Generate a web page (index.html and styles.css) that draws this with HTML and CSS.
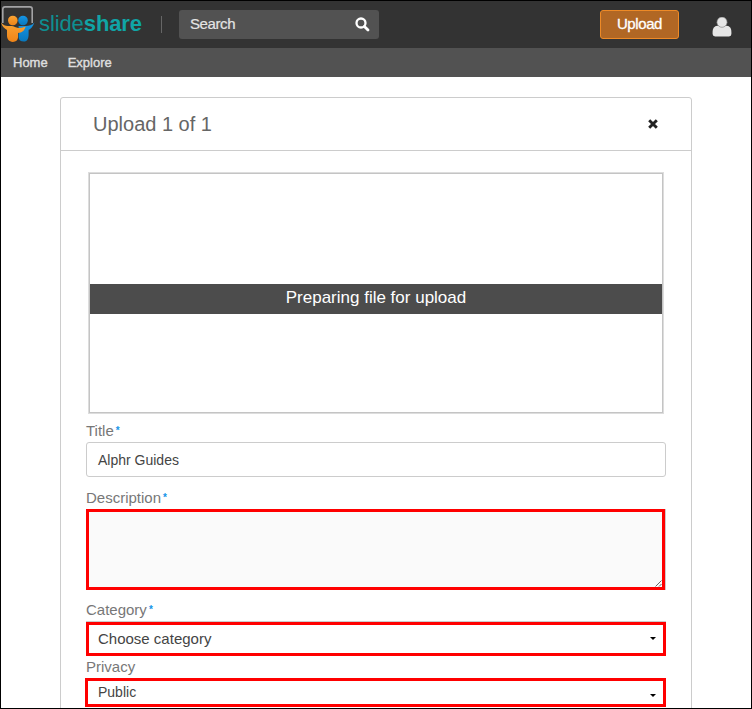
FILE: index.html
```html
<!DOCTYPE html>
<html lang="en">
<head>
<meta charset="utf-8">
<title>Upload - SlideShare</title>
<link rel="stylesheet" href="styles.css">
</head>
<body>
<div class="page">
  <header class="topbar">
    <a class="logo">
      <svg class="logo-mark" width="34" height="38" viewBox="0 0 34 38">
        <defs>
          <linearGradient id="orange" x1="0" y1="0" x2="0" y2="1"><stop offset="0" stop-color="#f9a333"/><stop offset="1" stop-color="#ef8418"/></linearGradient>
          <linearGradient id="blue" x1="0" y1="0" x2="0" y2="1"><stop offset="0" stop-color="#1695e6"/><stop offset="1" stop-color="#0878bd"/></linearGradient>
        </defs>
        <path d="M1.8 18V4.2Q1.8 1.9 4 1.9H29Q31.2 1.9 31.2 4.2V18" fill="none" stroke="#a3a3a5" stroke-width="1.6"/>
        <circle cx="11.8" cy="15.5" r="4.8" fill="url(#orange)"/>
        <circle cx="22" cy="15.5" r="4.8" fill="url(#blue)"/>
        <path d="M33.4 17.4C32 21.8 29.6 23.6 27.6 25V29.5C27.6 33.4 26.3 36.6 22.9 36.6 19.6 36.6 17.6 35 17.6 32V20.9H25C28 20.9 31.2 20.3 33.4 17.4Z" fill="url(#blue)"/>
        <path d="M0 17.4C2.4 20.4 5 20.9 9.5 20.9 13.5 20.9 14.5 22.6 17.5 22.9 20 23.2 22 22.7 24.6 21.6 23.6 26 20.7 27.8 17 28V32.5C16.8 35.3 15 36.9 11.9 36.9 8 36.9 6 34.2 6 30.6V24.9C3.6 23.4 1.1 21.6 0 17.4Z" fill="url(#orange)"/>
      </svg>
      <span class="logo-text">slide<b>share</b></span>
    </a>
    <span class="divider"></span>
    <div class="search">
      <span>Search</span>
      <svg width="15" height="15" viewBox="0 0 15 15"><circle cx="6" cy="6" r="4.5" fill="none" stroke="#fff" stroke-width="2.3"/><path d="M9.4 9.4L13 13" stroke="#fff" stroke-width="2.8" stroke-linecap="round"/></svg>
    </div>
    <a class="upload-btn">Upload</a>
    <svg class="user" width="20" height="20" viewBox="0 0 20 20"><path d="M5.3 8.8C2.3 9 .6 11.5 .6 15V17Q.6 19.4 3.1 19.4H17Q19.4 19.4 19.4 17V15C19.4 11.5 17.8 9 14.8 8.8Z" fill="#e6e6e6"/><circle cx="10" cy="5.2" r="5.1" fill="#e6e6e6" stroke="#777" stroke-width=".6"/></svg>
  </header>
  <nav class="nav"><a>Home</a><a>Explore</a></nav>

  <main class="card">
    <div class="card-head">
      <h1>Upload 1 of 1</h1>
      <svg width="10" height="10" viewBox="0 0 10 10"><path d="M1.2 1.2L8.8 8.8M8.8 1.2L1.2 8.8" stroke="#222" stroke-width="2.9"/></svg>
    </div>
    <div class="preview"><div class="status">Preparing file for upload</div></div>
    <form class="form">
      <label class="label label-title">Title<i>*</i></label>
      <div class="field input">Alphr Guides</div>
      <label class="label label-description">Description<i>*</i></label>
      <div class="field textarea">
        <svg width="7" height="7" viewBox="0 0 7 7"><path d="M.5 6.5L6.5 .5M4 6.5L6.5 4" stroke="#555" stroke-width=".9"/></svg>
      </div>
      <label class="label label-category">Category<i>*</i></label>
      <div class="field select category"><span>Choose category</span><b class="caret"></b></div>
      <label class="label label-privacy">Privacy</label>
      <div class="field select privacy"><span>Public</span><b class="caret"></b></div>
    </form>
  </main>
</div>
</body>
</html>
```
FILE: styles.css
```css
* { box-sizing: border-box; }
body {
  margin: 0;
  background: #fff;
  font-family: "Liberation Sans", Arial, sans-serif;
}
.page {
  height: 709px;
  border: 1px solid #000;
  overflow: hidden;
}
.topbar {
  height: 47px;
  background: #333;
  display: flex;
  align-items: center;
}
.logo { display: flex; align-items: center; width: 160px; }
.logo-mark { flex: none; margin-top: -1px; }
.logo-text {
  margin: -1px 0 0 4px;
  font-size: 22px;
  line-height: 30px;
  letter-spacing: -0.1px;
  color: #0e8f91;
}
.logo-text b { color: #10a5a6; }
.divider { width: 1px; height: 17px; background: #666; }
.search {
  width: 200px;
  height: 29px;
  margin-left: 17px;
  padding: 0 9px 0 11px;
  border-radius: 3px;
  background: #525252;
  color: #e4e4e4;
  font-size: 15px;
  display: flex;
  align-items: center;
  justify-content: space-between;
}
.search span { margin-top: -2px; letter-spacing: -0.4px; -webkit-text-stroke: 0.2px #e4e4e4; }
.upload-btn {
  width: 79px;
  height: 29px;
  margin-left: 221px;
  border: 1px solid #ee8a26;
  border-radius: 3px;
  background: #b16724;
  color: #fff;
  font-size: 15px;
  line-height: 26px;
  letter-spacing: -0.4px;
  text-align: center;
  -webkit-text-stroke: 0.3px #fff;
}
.user { margin-left: 33px; margin-top: 4px; }
.nav {
  height: 29px;
  padding-left: 12px;
  background: #525252;
  color: #dedede;
  font-size: 13px;
  line-height: 30px;
  display: flex;
  gap: 20px;
  -webkit-text-stroke: 0.4px #dedede;
}
.card {
  width: 632px;
  height: 630px;
  margin: 20px 0 0 59px;
  border: 1px solid #ccc;
  border-radius: 3px;
}
.card-head {
  height: 53px;
  padding: 0 33px 0 32px;
  border-bottom: 1px solid #ccc;
  display: flex;
  align-items: center;
  justify-content: space-between;
}
h1 {
  margin: 0;
  font-size: 20px;
  font-weight: 400;
  line-height: 24px;
  color: #666;
}
.preview {
  width: 576px;
  height: 242px;
  margin: 21px 0 0 27px;
  border: 1px solid #ddd;
  box-shadow: inset 0 0 0 1px #c4c4c4;
  padding: 111px 1px 0;
}
.status {
  height: 30px;
  background: #4c4c4c;
  color: #fff;
  font-size: 17px;
  line-height: 27px;
  text-align: center;
}
.form { width: 580px; margin-left: 25px; }
.label {
  display: block;
  font-size: 15px;
  color: #777;
}
.label i {
  font-style: normal;
  font-weight: bold;
  font-size: 10px;
  margin-left: 2px;
  vertical-align: 2px;
  line-height: 1px;
  color: #1494e8;
}
.label-title { height: 28px; line-height: 34px; }
.label-description { height: 32px; line-height: 42px; }
.label-category { height: 31px; line-height: 40px; }
.label-privacy { height: 22px; line-height: 22px; }
.field { color: #444; }
.input {
  height: 35px;
  padding-left: 11px;
  border: 1px solid #ccc;
  border-radius: 3px;
  font-size: 14px;
  line-height: 34px;
}
.textarea {
  width: 579px;
  height: 81px;
  border: 3px solid #f00;
  background: #fafafa;
  box-shadow: 1px 0 0 #ccc;
  display: flex;
  align-items: flex-end;
  justify-content: flex-end;
}
.select {
  border: 3px solid #f00;
  padding: 0 7px 0 9px;
  display: flex;
  align-items: center;
  justify-content: space-between;
}
.category { margin-top: 1px; height: 34px; font-size: 15px; box-shadow: 0 -1px 0 #ccc; }
.category span { margin-top: -2px; }
.category .caret { margin-top: -1px; }
.privacy {
  width: 581px;
  height: 29px;
  margin-left: -1px;
  padding-left: 10px;
  font-size: 14px;
}
.privacy span { margin-top: -1px; }
.caret {
  border: 3px solid transparent;
  border-top-color: #000;
  border-bottom: 0;
}
.privacy .caret { margin-top: 5px; }
```
